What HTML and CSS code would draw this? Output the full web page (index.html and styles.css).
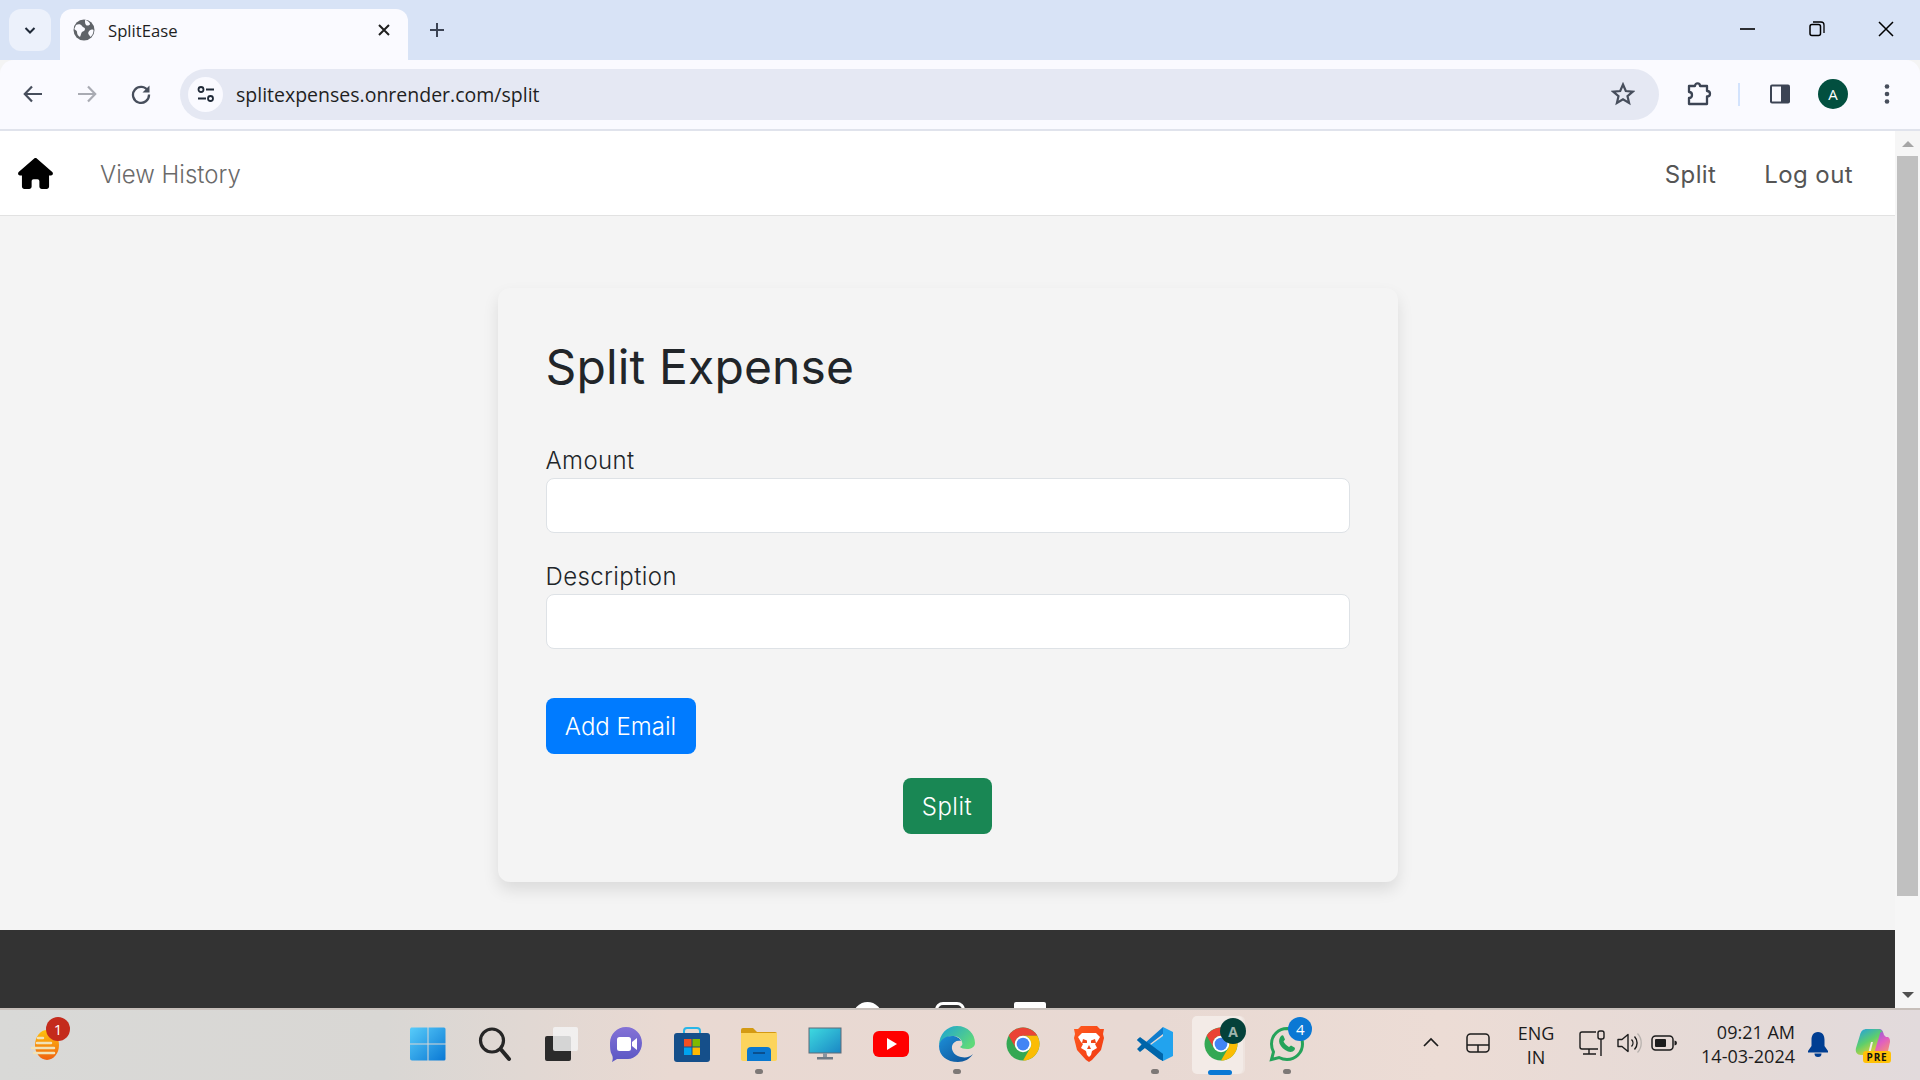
FILE: index.html
```html
<!DOCTYPE html>
<html lang="en">
<head>
<meta charset="utf-8">
<title>SplitEase</title>
<link rel="stylesheet" href="styles.css">
</head>
<body>
<div class="browser">
  <div class="tabstrip">
    <button class="tablist"><svg width="14" height="14" viewBox="0 0 14 14"><path d="M2.5 5 7 9.500 11.500 5" fill="none" stroke="#1f2937" stroke-width="2"/></svg></button>
    <div class="tab">
      <svg class="favicon" width="22" height="22" viewBox="0 0 22 22"><circle cx="11" cy="11" r="10.500" fill="#5f6368"/><path d="M3 6c2-1 5-1 6 1s3 1 3 3-2 2-3 3-1 3-2 5c-2-1-3-3-3-5S1 11 1.500 9.500zM14 1.500c1 1 3 2 3 3.500s-3 2-4 1-1-3-1-5zM20.500 11c0 3-1 5-3 7-1-2-3-3-2-5s3-3 5-2z" fill="#fafaff"/></svg>
      <span class="tabtitle">SplitEase</span>
      <svg class="tabclose" width="14" height="14" viewBox="0 0 14 14"><path d="M2 2 12 12M12 2 2 12" stroke="#1f1f1f" stroke-width="2"/></svg>
    </div>
    <svg class="newtab" width="18" height="18" viewBox="0 0 18 18"><path d="M9 2V16M2 9H16" stroke="#3c4454" stroke-width="2"/></svg>
    <div class="winctl">
      <svg width="16" height="16" viewBox="0 0 16 16"><path d="M0 8H15" stroke="#000" stroke-width="1.600"/></svg>
      <svg width="16" height="16" viewBox="0 0 16 16"><rect x="1" y="3.500" width="10.500" height="11" rx="2" fill="none" stroke="#000" stroke-width="1.500"/><path d="M4 1h8a3 3 0 0 1 3 3v8" fill="none" stroke="#000" stroke-width="1.300"/></svg>
      <svg width="16" height="16" viewBox="0 0 16 16"><path d="M1 1 15 15M15 1 1 15" stroke="#000" stroke-width="1.500"/></svg>
    </div>
  </div>
  <div class="toolbar">
    <svg class="tb back" width="22" height="22" viewBox="0 0 22 22"><path d="M20 11H3M10 3.500 2.800 11 10 18.500" fill="none" stroke="#474e5c" stroke-width="2.200"/></svg>
    <svg class="tb fwd" width="22" height="22" viewBox="0 0 22 22"><path d="M2 11H19M12 3.500 19.200 11 12 18.500" fill="none" stroke="#a9abb3" stroke-width="2.200"/></svg>
    <svg class="tb reload" width="22" height="22" viewBox="0 0 22 22"><path d="M18 8A8 8 0 1 0 19 11.500" fill="none" stroke="#474e5c" stroke-width="2.300"/><path d="M19.500 2.500V9.500H12.500Z" fill="#474e5c"/></svg>
    <div class="omnibox">
      <span class="siteinfo"><svg width="20" height="20" viewBox="0 0 20 20"><circle cx="5" cy="5.500" r="2.500" fill="none" stroke="#1f2937" stroke-width="1.800"/><path d="M10 5.500H18M2 14.500H10" stroke="#1f2937" stroke-width="2"/><circle cx="14.500" cy="14.500" r="2.500" fill="none" stroke="#1f2937" stroke-width="1.800"/></svg></span>
      <span class="url">splitexpenses.onrender.com/split</span>
      <svg class="star" width="24" height="24" viewBox="0 0 24 24"><path d="M12 2.500 14.800 9 21.800 9.600 16.500 14.200 18.100 21 12 17.400 5.900 21 7.500 14.200 2.200 9.600 9.200 9Z" fill="none" stroke="#474e5c" stroke-width="2.200" stroke-linejoin="miter"/></svg>
    </div>
    <svg class="tb ext" width="26" height="26" viewBox="0 0 26 26"><path d="M3 5H9C9 1.500 14 1.500 14 5H21V10C25 10 25 15.500 21 15.500V23H3V17C7 17 7 11 3 11Z" fill="none" stroke="#3c4454" stroke-width="2.300" stroke-linejoin="round"/></svg>
    <span class="tbsep"></span>
    <svg class="tb panel" width="22" height="22" viewBox="0 0 22 22"><rect x="1" y="1.500" width="20" height="19" rx="2" fill="#3c4454"/><rect x="3" y="3.500" width="9" height="15" fill="#fafaff"/></svg>
    <span class="avatar">A</span>
    <svg class="tb menu" width="6" height="22" viewBox="0 0 6 22"><circle cx="3" cy="3.500" r="2.300" fill="#474e5c"/><circle cx="3" cy="11" r="2.300" fill="#474e5c"/><circle cx="3" cy="18.500" r="2.300" fill="#474e5c"/></svg>
  </div>
  <div class="viewport">
    <div class="page">
      <nav class="navbar">
        <a class="brand" href="#"><svg width="35" height="31" viewBox="0 0 576 512"><path d="M575.800 255.500c0 18-15 32.100-32 32.100h-32l.7 160.200c0 2.700-.2 5.400-.5 8.100V472c0 22.100-17.900 40-40 40H456c-1.100 0-2.200 0-3.300-.1-1.400.1-2.800.1-4.200.1H416 392c-22.100 0-40-17.900-40-40V448 384c0-17.700-14.300-32-32-32H256c-17.700 0-32 14.300-32 32v64 24c0 22.100-17.900 40-40 40H160 128.100c-1.500 0-3-.1-4.500-.2-1.200.1-2.400.2-3.600.2H104c-22.100 0-40-17.900-40-40V360c0-.9 0-1.900.1-2.800V287.600H32c-18 0-32-14-32-32.100 0-9 3-17 10-24L266.400 8c7-7 15-8 22-8s15 2 21 7L564.800 231.500c8 7 12 15 11 24z"/></svg></a>
        <a class="navlink history" href="#">View History</a>
        <div class="navright">
          <a class="navlink strong" href="#">Split</a>
          <a class="navlink strong" href="#">Log out</a>
        </div>
      </nav>
      <main class="main">
        <section class="card">
          <h1 class="title">Split Expense</h1>
          <form class="form">
            <div class="field"><label class="label" for="amount">Amount</label><input class="input" id="amount" type="text"></div>
            <div class="field"><label class="label" for="desc">Description</label><input class="input" id="desc" type="text"></div>
            <button class="btn btn-blue" type="button">Add Email</button>
            <div class="center"><button class="btn btn-green" type="button">Split</button></div>
          </form>
        </section>
      </main>
      <footer class="footer">
        <div class="socials">
          <span class="soc soc-round"></span>
          <span class="soc soc-insta"></span>
          <span class="soc soc-square"></span>
        </div>
      </footer>
    </div>
    <div class="scrollbar">
      <span class="arrow-up"></span>
      <span class="thumb"></span>
      <span class="arrow-down"></span>
    </div>
  </div>
  <div class="taskbar">
    <div class="widget">
      <svg width="34" height="36" viewBox="0 0 34 36"><defs><linearGradient id="wg" x1="0" y1="0" x2="0" y2="1"><stop offset="0" stop-color="#ffc20e"/><stop offset="1" stop-color="#f0600f"/></linearGradient></defs><ellipse cx="17" cy="19" rx="12" ry="15" fill="url(#wg)"/><path d="M8 12h5M7 17h14M2 22h22M4 27h20" stroke="#f0e2b8" stroke-width="2.500" stroke-linecap="round"/></svg>
      <span class="badge-red">1</span>
    </div>
    <div class="apps">
      <span class="app"><svg width="36" height="36" viewBox="0 0 36 36"><defs><linearGradient id="w1" x1="0" y1="0" x2="1" y2="1"><stop offset="0" stop-color="#58ccfa"/><stop offset="1" stop-color="#0a78d4"/></linearGradient></defs><path d="M1 1.500h16.500V17.500H0V3zM18.500 1.500H34a1.500 1.500 0 0 1 1.500 1.500V17.500H18.500zM0 18.500H17.500V34.500H2a2 2 0 0 1-2-2zM18.500 18.500H35.500V33a1.500 1.500 0 0 1-1.500 1.500H18.500z" fill="url(#w1)"/></svg></span>
      <span class="app search"><svg width="36" height="36" viewBox="0 0 36 36"><circle cx="15" cy="14.500" r="11.500" fill="none" stroke="#262626" stroke-width="3.200"/><path d="M24 23.500 32 33" stroke="#262626" stroke-width="4" stroke-linecap="round"/></svg></span>
      <span class="app"><svg width="36" height="36" viewBox="0 0 36 36"><rect x="3" y="10" width="26" height="25" rx="2" fill="#2b2b2b"/><rect x="11" y="1" width="25" height="24" rx="2" fill="#f3f3f3" opacity=".85"/></svg></span>
      <span class="app"><svg width="36" height="36" viewBox="0 0 36 36"><defs><linearGradient id="m1" x1="0" y1="0" x2="0" y2="1"><stop offset="0" stop-color="#8472d6"/><stop offset="1" stop-color="#5a56c4"/></linearGradient></defs><path d="M18 1c9 0 16 7 16 16s-7 16-14 16H9l-5 3c1-3 1-5 0-7C2 26 2 21 2 17 2 8 9 1 18 1Z" fill="url(#m1)"/><rect x="9" y="11" width="14" height="14" rx="2.500" fill="#fff"/><path d="M24 16 29 12V24L24 20Z" fill="#fff"/></svg></span>
      <span class="app"><svg width="36" height="36" viewBox="0 0 36 36"><path d="M10 8V5a3 3 0 0 1 3-3h10a3 3 0 0 1 3 3v3" fill="none" stroke="#29b6e8" stroke-width="2"/><rect x="0" y="7" width="36" height="29" rx="3" fill="#154f8a"/><rect x="10" y="13" width="7.500" height="7.500" fill="#f25022"/><rect x="18.500" y="13" width="7.500" height="7.500" fill="#7fba00"/><rect x="10" y="21.500" width="7.500" height="7.500" fill="#00a4ef"/><rect x="18.500" y="21.500" width="7.500" height="7.500" fill="#ffb900"/></svg></span>
      <span class="app dot"><svg width="36" height="34" viewBox="0 0 36 34"><path d="M0 3a2 2 0 0 1 2-2h10l4 4h18a2 2 0 0 1 2 2v4H0Z" fill="#d49a12"/><path d="M0 6H36V32a2 2 0 0 1-2 2H2a2 2 0 0 1-2-2Z" fill="#fcd45c"/><path d="M6 34V24a4 4 0 0 1 4-4H26a4 4 0 0 1 4 4V34Z" fill="#0b78cf"/><path d="M12 26H24" stroke="#0a4f8e" stroke-width="2"/></svg></span>
      <span class="app"><svg width="34" height="34" viewBox="0 0 34 34"><defs><linearGradient id="mon" x1="0" y1="0" x2="1" y2="1"><stop offset="0" stop-color="#3edbe0"/><stop offset="1" stop-color="#1a86c4"/></linearGradient></defs><rect x="1" y="1" width="32" height="25" fill="url(#mon)" stroke="#5e6b76" stroke-width="1"/><rect x="15" y="26" width="4" height="5" fill="#8a95a0"/><rect x="9" y="30" width="16" height="2.500" fill="#6f7b86"/></svg></span>
      <span class="app"><svg width="36" height="26" viewBox="0 0 36 26"><rect x="0" y="0" width="36" height="26" rx="6" fill="#f00"/><path d="M14 7 24 13 14 19Z" fill="#fff"/></svg></span>
      <span class="app dot"><svg width="36" height="36" viewBox="0 0 36 36"><defs><linearGradient id="e1" x1="0" y1="0" x2="1" y2=".6"><stop offset="0" stop-color="#1aa0d8"/><stop offset="1" stop-color="#5fd97a"/></linearGradient><linearGradient id="e2" x1="0" y1="0" x2="1" y2="1"><stop offset="0" stop-color="#1d8fd8"/><stop offset="1" stop-color="#0c4f94"/></linearGradient></defs><path d="M18 0C29 0 36 8 36 17c0 4-4 6-8 6-3 0-6-1-7-2 2-1 3-3 2-5-1-4-5-6-9-6C8 10 2 14 0 20 0 8 8 0 18 0Z" fill="url(#e1)"/><path d="M0 20C1 13 7 10 13 10c4 0 8 2 9 5-4-1-8 1-9 5-1 6 4 10 9 11 5 1 9 0 12-3-3 5-9 8-15 8C8 36 0 30 0 20Z" fill="url(#e2)"/></svg></span>
      <span class="app"><svg width="36" height="36" viewBox="0 0 48 48"><circle cx="24" cy="24" r="22" fill="#34a853"/><path d="M5 13A22 22 0 0 1 43 13H24A11 11 0 0 0 14.500 29.500Z" fill="#ea4335"/><path d="M43 13A22 22 0 0 1 24 46L33.500 29.500A11 11 0 0 0 24 13Z" fill="#fbbc04"/><circle cx="24" cy="24" r="11" fill="#fff"/><circle cx="24" cy="24" r="8.500" fill="#4285f4"/></svg></span>
      <span class="app"><svg width="32" height="38" viewBox="0 0 32 38"><defs><linearGradient id="b1" x1="0" y1="0" x2="1" y2="1"><stop offset="0" stop-color="#ff5a1f"/><stop offset="1" stop-color="#f03a12"/></linearGradient></defs><path d="M8 1H24L27 4 31 4 30 9 31 13 28 25 19 35 16 37 13 35 4 25 1 13 2 9 1 4 5 4Z" fill="url(#b1)"/><path d="M9 8H23L27 12 24 17 22 19 24 23 19 26 18 30 16 32 14 30 13 26 8 23 10 19 8 17 5 12Z" fill="#fff"/><path d="M10 14 14 15.500 14 18 9 18ZM22 14 18 15.500 18 18 23 18ZM16 20 14 24H18Z" fill="#f0481a"/></svg></span>
      <span class="app dot"><svg width="36" height="36" viewBox="0 0 36 36"><path d="M26 1 36 6V30L26 35 11 21 26 10Z" fill="#22a3ee"/><path d="M26 1 8 17 2 12 0 14 8 22 26 35 26 28 13 18 26 8Z" fill="#0f7ccc"/><path d="M0 14 3 11 26 28V35L22 33 8 22 3 26 0 23 5 18Z" fill="#0065a9"/></svg></span>
      <span class="app active">
        <svg width="36" height="36" viewBox="0 0 48 48"><circle cx="24" cy="24" r="22" fill="#34a853"/><path d="M5 13A22 22 0 0 1 43 13H24A11 11 0 0 0 14.500 29.500Z" fill="#ea4335"/><path d="M43 13A22 22 0 0 1 24 46L33.500 29.500A11 11 0 0 0 24 13Z" fill="#fbbc04"/><circle cx="24" cy="24" r="11" fill="#fff"/><circle cx="24" cy="24" r="8.500" fill="#4285f4"/></svg>
        <span class="badge-a">A</span>
      </span>
      <span class="app dot wa">
        <svg width="36" height="36" viewBox="0 0 36 36"><path d="M18 2.500A15.500 15.500 0 0 1 18 33.500C15 33.500 12.500 32.800 10 31.500L2.500 33.500 4.500 26C3.200 23.500 2.500 21 2.500 18A15.500 15.500 0 0 1 18 2.500Z" fill="none" stroke="#25a35a" stroke-width="3"/><path d="M12 10c1-1 2-1 2.500 0l1.500 3.500-1.500 2c1 2 3 4 5.500 5.500l2-1.500 3.500 2c.7.500.5 1.500 0 2.500-1.500 2-4 2.500-6.500 1.500C15 24 12 21 10.500 17.500 9.500 14.500 10.500 11.500 12 10Z" fill="#25a35a"/></svg>
        <span class="badge-blue">4</span>
      </span>
    </div>
    <div class="tray">
      <svg class="t-chev" width="18" height="12" viewBox="0 0 18 12"><path d="M2 10 9 3 16 10" fill="none" stroke="#1c1c1c" stroke-width="1.700"/></svg>
      <svg class="t-pad" width="24" height="22" viewBox="0 0 24 22"><rect x="1" y="2" width="22" height="18" rx="3.500" fill="none" stroke="#1c1c1c" stroke-width="1.500"/><path d="M1 13H23M12 13V20" stroke="#1c1c1c" stroke-width="1.500"/></svg>
      <div class="t-lang"><span>ENG</span><span>IN</span></div>
      <svg class="t-net" width="28" height="28" viewBox="0 0 28 28"><path d="M18 3H4a2 2 0 0 0-2 2V18a2 2 0 0 0 2 2H20" fill="none" stroke="#1c1c1c" stroke-width="1.400"/><path d="M11 20V25M5 25H18" stroke="#1c1c1c" stroke-width="1.400"/><rect x="20" y="2" width="6" height="8" rx="2" fill="none" stroke="#1c1c1c" stroke-width="1.400"/><path d="M23 10V27" stroke="#1c1c1c" stroke-width="1.400"/></svg>
      <svg class="t-vol" width="26" height="24" viewBox="0 0 26 24"><path d="M2 8.500H6L12 3.500V20.500L6 15.500H2Z" fill="none" stroke="#1c1c1c" stroke-width="1.400" stroke-linejoin="round"/><path d="M15.500 8.500a5 5 0 0 1 0 7M18.500 5.500a9.500 9.500 0 0 1 0 13" fill="none" stroke="#1c1c1c" stroke-width="1.400"/><path d="M21.500 2.500a14 14 0 0 1 0 19" fill="none" stroke="#b8b2ae" stroke-width="1.300"/></svg>
      <svg class="t-bat" width="26" height="18" viewBox="0 0 26 18"><rect x="1" y="2" width="21" height="14" rx="3.500" fill="none" stroke="#1c1c1c" stroke-width="1.500"/><rect x="4" y="5" width="11" height="8" rx="1" fill="#1c1c1c"/><path d="M23.500 6.500a2.500 2.500 0 0 1 0 5Z" fill="#1c1c1c"/></svg>
      <div class="t-clock"><span>09:21 AM</span><span>14-03-2024</span></div>
      <svg class="t-bell" width="22" height="26" viewBox="0 0 22 26"><path d="M11 1C6 1 4.500 5 4.500 9V15L1 20V21.500H21V20L17.500 15V9C17.500 5 16 1 11 1Z" fill="#003e92"/><path d="M7.500 22.500a3.500 3.500 0 0 0 7 0Z" fill="#003e92"/></svg>
      <span class="t-copilot">
        <svg width="36" height="30" viewBox="0 0 36 30"><defs><linearGradient id="c1" x1="0" y1="0" x2=".6" y2="1"><stop offset="0" stop-color="#1e9de8"/><stop offset=".55" stop-color="#5fcf6a"/><stop offset="1" stop-color="#f4d02f"/></linearGradient><linearGradient id="c2" x1=".2" y1="0" x2=".8" y2="1"><stop offset="0" stop-color="#7a5fe0"/><stop offset=".55" stop-color="#e05fc0"/><stop offset="1" stop-color="#f8956a"/></linearGradient></defs><path d="M15 1H24C27 1 28 3 29 7L31 9H33C35 10 35 12 35 14L33 23C32 26 30 27 27 27H16L21 11C19 7 18 3 15 1Z" fill="url(#c2)"/><path d="M23 1H12C8 1 6 3 5 7L1 20C0 24 2 27 6 27H16C19 27 19 25 20 22L24 9C25 5 26 2 28 5 27 2 25 1 23 1Z" fill="url(#c1)"/><path d="M16 14H18L15 26H13Z" fill="#f6ece8"/></svg>
        <span class="pre">PRE</span>
      </span>
    </div>
  </div>
</div>
</body>
</html>
```
FILE: styles.css
```css
* { box-sizing: border-box; }
html, body { margin: 0; padding: 0; height: 100%; overflow: hidden; }
body { font-family: "Inter", "Liberation Sans", sans-serif; }
a { text-decoration: none; }
.browser { width: 1920px; height: 1080px; display: flex; flex-direction: column; overflow: hidden; background: #f4f4f4; }

/* tab strip */
.tabstrip { height: 60px; flex: none; background: #d8e3f6; display: flex; align-items: flex-end; padding-left: 9px; }
.tablist { width: 42px; height: 42px; margin: 0 9px 9px 0; border: 0; border-radius: 12px; background: #ecf1fb; display: flex; align-items: center; justify-content: center; padding: 0; }
.tab { width: 348px; height: 51px; background: #fafaff; border-radius: 12px 12px 0 0; display: flex; align-items: center; padding: 0 17px 9px 13px; }
.favicon { flex: none; }
.tabtitle { margin-left: 13px; font: 16.700px "Open Sans", "Liberation Sans", sans-serif; color: #1f1f1f; flex: 1; }
.newtab { margin: 0 0 21px 20px; }
.winctl { margin-left: auto; width: 180px; height: 60px; display: flex; align-items: center; justify-content: space-between; padding: 0 26px 2px 0; }

/* toolbar */
.toolbar { height: 71px; flex: none; background: #fafaff; border-bottom: 2px solid #e0e3ec; display: flex; align-items: center; padding: 0 0 1px 22px; border-radius: 14px 14px 0 0; position: relative; }
.tb { flex: none; }
.fwd { margin-left: 32px; }
.reload { margin-left: 32px; }
.omnibox { width: 1479px; height: 51px; margin-left: 28px; border-radius: 26px; background: #e5e8f3; display: flex; align-items: center; padding: 0 24px 0 8px; flex: none; }
.siteinfo { width: 35px; height: 35px; border-radius: 50%; background: #fafaff; display: flex; align-items: center; justify-content: center; flex: none; }
.url { margin-left: 13px; font: 19.500px "Open Sans", "Liberation Sans", sans-serif; color: #1f1f1f; flex: 1; padding-top: 1px; }
.star { flex: none; }
.ext { margin-left: 27px; }
.tbsep { width: 2px; height: 23px; background: #d3e3fd; margin-left: 26px; flex: none; }
.panel { margin-left: 29px; }
.avatar { width: 30px; height: 30px; margin-left: 27px; border-radius: 50%; background: #024f3f; color: #fff; font: 15px "Open Sans", sans-serif; display: flex; align-items: center; justify-content: center; flex: none; }
.menu { margin-left: 36px; }

/* page */
.viewport { flex: 1; min-height: 0; display: flex; position: relative; }
.page { width: 1895px; flex: none; background: #f4f4f4; overflow: hidden; display: flex; flex-direction: column; }
.navbar { height: 85px; flex: none; background: #fff; border-bottom: 1px solid #e2e2e2; display: flex; align-items: center; padding: 0 42px 0 18px; }
.brand { display: flex; color: #000; }
.brand svg { display: block; fill: #000; }
.navlink { display: block; padding-top: 3px; font-size: 24px; line-height: 36px; color: #6a6a6a; font-weight: 300; }
.history { margin-left: 47px; }
.navright { margin-left: auto; display: flex; gap: 48px; }
.strong { color: #555; font-weight: 400; letter-spacing: .4px; }
.main { display: flex; justify-content: center; padding: 72px 0 48px; flex: none; }
.card { width: 900px; padding: 48px; background: #f4f4f4; border-radius: 12px; box-shadow: 0 8px 16px rgba(0,0,0,.1); }
.title { margin: 0 0 46px; padding-top: 2px; font-size: 48px; line-height: 58px; font-weight: 400; color: #212529; letter-spacing: .15px; }
.form { display: flex; flex-direction: column; }
.field { margin-bottom: 25px; }
.label { display: block; padding-top: 2px; font-size: 24px; line-height: 34px; font-weight: 300; color: #212529; letter-spacing: .4px; }
.input { display: block; width: 100%; height: 55px; border: 1px solid #dee2e6; border-radius: 8px; background: #fff; padding: 0 18px; outline: 0; }
.btn { height: 56px; padding: 2px 0 0; border: 0; border-radius: 8px; color: #fff; font: 300 24px/36px "Inter", sans-serif; flex: none; }
.btn-blue { width: 150px; background: #007bff; margin-top: 24px; }
.center { display: flex; justify-content: center; margin-top: 24px; padding-right: 1px; }
.btn-green { width: 89px; background: #198754; letter-spacing: .5px; }
.footer { flex: 1; background: #333; min-height: 100px; display: flex; justify-content: center; }
.socials { display: flex; align-items: flex-start; gap: 53px; padding: 72px 0 0 0; margin-left: 4px; }
.soc { display: block; width: 29px; height: 40px; background: #fff; }
.soc-round { border-radius: 50%; height: 29px; }
.soc-insta { background: none; border: 3px solid #fff; border-radius: 8px; width: 30px; height: 30px; }
.soc-square { width: 32px; height: 30px; border-radius: 2px 2px 0 0; margin-left: -4px; }

/* scrollbar */
.scrollbar { width: 25px; flex: none; background: #f6f6f6; display: flex; flex-direction: column; align-items: center; position: relative; }
.arrow-up { margin-top: 10px; width: 0; height: 0; border: 6px solid transparent; border-top: 0; border-bottom: 6px solid #a6a6a6; }
.thumb { width: 21px; height: 740px; margin-top: 9px; background: #c0c0c0; }
.arrow-down { margin-top: 96px; width: 0; height: 0; border: 6px solid transparent; border-bottom: 0; border-top: 6px solid #505050; }

/* taskbar */
.taskbar { height: 72px; flex: none; position: relative; display: flex; align-items: center; border-top: 2px solid #c7bfba; background: linear-gradient(90deg, #d9d9d7 0%, #d9d7d4 20%, #e9d9d2 35%, #e8d9d3 60%, #ecdcd5 75%, #e5dad7 90%, #e2dadc 100%); font-family: "Open Sans", "Liberation Sans", sans-serif; color: #1c1c1c; }
.widget { width: 395px; flex: none; padding: 0 0 2px 30px; display: flex; align-items: center; position: relative; height: 100%; }
.badge-red { position: absolute; left: 46px; top: 7px; width: 24px; height: 24px; border-radius: 50%; background: #c42b1c; color: #fff; font-size: 15px; display: flex; align-items: center; justify-content: center; }
.apps { display: flex; height: 100%; flex: none; }
.app { width: 66.100px; height: 100%; padding-bottom: 3px; display: flex; align-items: center; justify-content: center; position: relative; }
.search { padding-left: 2px; }
.dot::after { content: ""; position: absolute; bottom: 6px; left: 50%; width: 8px; height: 5px; margin-left: -4px; border-radius: 3px; background: #7d7876; }
.active::before { content: ""; position: absolute; left: 4px; top: 6px; width: 51px; height: 58px; border-radius: 5px; background: #f3ebe7; box-shadow: 2px 0 0 #eee3de; }
.active svg { position: relative; }
.active::after { content: ""; position: absolute; bottom: 5px; left: 20px; width: 24px; height: 5px; border-radius: 3px; background: #0a78d4; }
.badge-a { position: absolute; left: 32px; top: 8px; width: 26px; height: 26px; border-radius: 50%; background: #04413a; color: #9fb5ae; font-size: 14px; font-weight: 700; display: flex; align-items: center; justify-content: center; }
.badge-blue { position: absolute; left: 34px; top: 7px; width: 24px; height: 24px; border-radius: 50%; background: #0a78d4; color: #fff; font-size: 15px; display: flex; align-items: center; justify-content: center; }
.tray { position: absolute; top: 0; bottom: 0; left: 0; right: 0; pointer-events: none; }
.tray > * { position: absolute; }
.t-chev { left: 1422px; top: 26px; }
.t-pad { left: 1466px; top: 22px; }
.t-lang { left: 1516px; top: 11px; width: 40px; display: flex; flex-direction: column; align-items: center; font-size: 18px; line-height: 24px; }
.t-net { left: 1578px; top: 19px; }
.t-vol { left: 1616px; top: 21px; }
.t-bat { left: 1651px; top: 24px; }
.t-clock { left: 1670px; width: 125px; top: 10px; display: flex; flex-direction: column; align-items: flex-end; font-size: 18px; line-height: 24px; }
.t-bell { left: 1807px; top: 21px; }
.t-copilot { left: 1855px; top: 18px; width: 36px; height: 40px; }
.pre { position: absolute; right: 0; bottom: 5px; width: 28px; height: 12px; border-radius: 3px; background: #ffc107; color: #111; font-size: 10px; line-height: 12px; font-weight: 700; text-align: center; letter-spacing: .8px; }
```
